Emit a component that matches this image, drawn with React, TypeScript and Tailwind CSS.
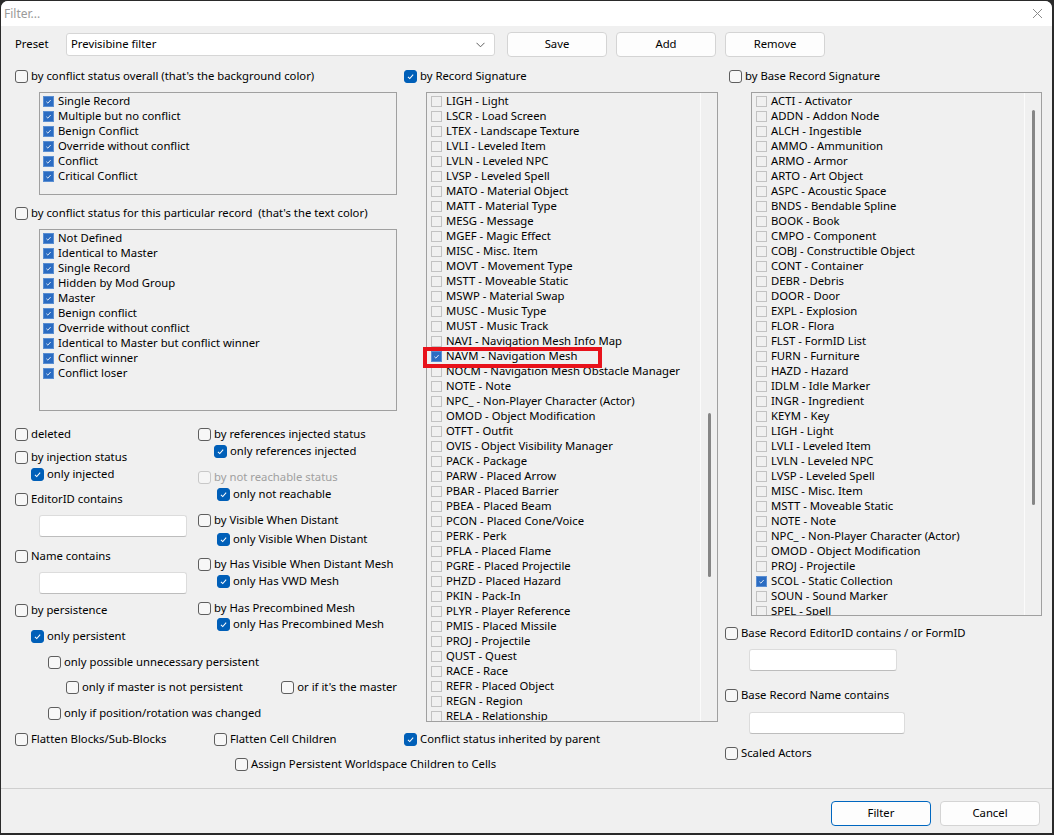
import React from 'react'

const conflictOverall = [
  'Single Record',
  'Multiple but no conflict',
  'Benign Conflict',
  'Override without conflict',
  'Conflict',
  'Critical Conflict',
]

const conflictThis = [
  'Not Defined',
  'Identical to Master',
  'Single Record',
  'Hidden by Mod Group',
  'Master',
  'Benign conflict',
  'Override without conflict',
  'Identical to Master but conflict winner',
  'Conflict winner',
  'Conflict loser',
]

const recordSigs = [
  'LIGH - Light', 'LSCR - Load Screen', 'LTEX - Landscape Texture', 'LVLI - Leveled Item',
  'LVLN - Leveled NPC', 'LVSP - Leveled Spell', 'MATO - Material Object', 'MATT - Material Type',
  'MESG - Message', 'MGEF - Magic Effect', 'MISC - Misc. Item', 'MOVT - Movement Type',
  'MSTT - Moveable Static', 'MSWP - Material Swap', 'MUSC - Music Type', 'MUST - Music Track',
  'NAVI - Navigation Mesh Info Map', 'NAVM - Navigation Mesh', 'NOCM - Navigation Mesh Obstacle Manager',
  'NOTE - Note', 'NPC_ - Non-Player Character (Actor)', 'OMOD - Object Modification', 'OTFT - Outfit',
  'OVIS - Object Visibility Manager', 'PACK - Package', 'PARW - Placed Arrow', 'PBAR - Placed Barrier',
  'PBEA - Placed Beam', 'PCON - Placed Cone/Voice', 'PERK - Perk', 'PFLA - Placed Flame',
  'PGRE - Placed Projectile', 'PHZD - Placed Hazard', 'PKIN - Pack-In', 'PLYR - Player Reference',
  'PMIS - Placed Missile', 'PROJ - Projectile', 'QUST - Quest', 'RACE - Race', 'REFR - Placed Object',
  'REGN - Region', 'RELA - Relationship',
]

const baseSigs = [
  'ACTI - Activator', 'ADDN - Addon Node', 'ALCH - Ingestible', 'AMMO - Ammunition', 'ARMO - Armor',
  'ARTO - Art Object', 'ASPC - Acoustic Space', 'BNDS - Bendable Spline', 'BOOK - Book',
  'CMPO - Component', 'COBJ - Constructible Object', 'CONT - Container', 'DEBR - Debris', 'DOOR - Door',
  'EXPL - Explosion', 'FLOR - Flora', 'FLST - FormID List', 'FURN - Furniture', 'HAZD - Hazard',
  'IDLM - Idle Marker', 'INGR - Ingredient', 'KEYM - Key', 'LIGH - Light', 'LVLI - Leveled Item',
  'LVLN - Leveled NPC', 'LVSP - Leveled Spell', 'MISC - Misc. Item', 'MSTT - Moveable Static',
  'NOTE - Note', 'NPC_ - Non-Player Character (Actor)', 'OMOD - Object Modification',
  'PROJ - Projectile', 'SCOL - Static Collection', 'SOUN - Sound Marker', 'SPEL - Spell',
]

// white tick used by both checkbox styles
const Tick = () => (
  <svg viewBox="0 0 12 12" className="block w-full h-full">
    <path d="M3.2 6.3 5.2 8.2 8.9 4" fill="none" stroke="white" strokeWidth="1.1" />
  </svg>
)

type CheckProps = {
  label: string
  checked?: boolean
  disabled?: boolean
  className?: string
}

function Check({ label, checked, disabled, className = '' }: CheckProps) {
  const box = checked
    ? 'bg-[#005fb8] border-[#005fb8]'
    : disabled
      ? 'bg-[#f5f5f5] border-[#c8c8c8]'
      : 'bg-[#f7f7f7] border-[#5e5e5e]'
  return (
    <div className={`flex items-center h-4 whitespace-pre ${className}`}>
      <span className={`w-[13px] h-[13px] shrink-0 rounded-[3px] border ${box}`}>
        {checked && <Tick />}
      </span>
      <span className={`ml-[3px] ${disabled ? 'text-[#a0a0a0]' : 'text-black'}`}>{label}</span>
    </div>
  )
}

function ListRow({ label, checked }: { label: string; checked?: boolean }) {
  return (
    <div className="flex items-center h-[15px] whitespace-nowrap">
      <span
        className={`w-[11px] h-[11px] shrink-0 border ${
          checked ? 'bg-[#2b6cc2] border-[#5a8ed2]' : 'border-[#c2c2c2]'
        }`}
      >
        {checked && <Tick />}
      </span>
      <span className="ml-[4px]">{label}</span>
    </div>
  )
}

type ListBoxProps = {
  items: string[]
  checked?: string[]
  className?: string
  pad?: string
  thumb?: string
}

function ListBox({ items, checked = [], className = '', pad = 'pl-[4px]', thumb }: ListBoxProps) {
  return (
    <div className={`flex border border-[#a0a0a0] overflow-hidden ${className}`}>
      <div className={`flex-1 min-w-0 overflow-hidden pt-[1px] ${pad}`}>
        {items.map((it, i) => (
          <ListRow key={i} label={it} checked={checked.includes(it)} />
        ))}
      </div>
      {thumb && (
        <div className="w-[17px] shrink-0 border-l border-[#fbfbfb]">
          <div className={`mx-auto w-[3px] rounded-full bg-[#868686] ${thumb}`} />
        </div>
      )}
    </div>
  )
}

const Field = ({ className = '' }: { className?: string }) => (
  <div className={`h-[22px] bg-white border border-[#dcdcdc] border-b-[#bdbdbd] rounded-[3px] ${className}`} />
)

const Button = ({ label, primary }: { label: string; primary?: boolean }) => (
  <div
    className={`w-[100px] h-[25px] flex items-center justify-center rounded-[4px] bg-[#fdfdfd] border ${
      primary ? 'border-[#0067c0]' : 'border-[#d4d4d4]'
    }`}
  >
    {label}
  </div>
)

export default function App() {
  return (
    <div className="w-[1054px] h-[835px] bg-[#2a2a2a] pt-[1px] pl-[1px] pr-[2px] pb-[2px] font-['Noto_Sans',sans-serif] text-[11.3px] text-black">
      <div className="w-full h-full flex flex-col rounded-t-[7px] overflow-hidden bg-[#f0f0f0]">
        {/* title bar */}
        <div className="h-[25px] shrink-0 bg-white flex items-center justify-between pl-[3px] pr-[9px]">
          <span className="text-[12px] text-[#9a9a9a]">Filter...</span>
          <svg width="11" height="11" viewBox="0 0 11 11">
            <path d="M1 1 10 10M10 1 1 10" stroke="#8a8a8a" strokeWidth="1" />
          </svg>
        </div>

        <div className="flex-1 flex flex-col">
          {/* preset row */}
          <div className="flex items-center h-[25px] mt-[6px] pl-[14px]">
            <span className="w-[51px]">Preset</span>
            <div className="w-[429px] h-[23px] flex items-center justify-between bg-white border border-[#d6d6d6] rounded-[3px] pl-[4px] pr-[9px]">
              <span>Previsibine filter</span>
              <svg width="9" height="6" viewBox="0 0 9 6">
                <path d="M0.5 0.8 4.5 4.8 8.5 0.8" fill="none" stroke="#5f5f5f" strokeWidth="1" />
              </svg>
            </div>
            <div className="ml-[12px] flex gap-[9px]">
              <Button label="Save" />
              <Button label="Add" />
              <Button label="Remove" />
            </div>
          </div>

          {/* main columns */}
          <div className="flex mt-[11px] pl-[14px]">
            <div className="w-[703px] flex flex-col">
              <div className="flex">
                {/* left column */}
                <div className="w-[382px] flex flex-col">
                  <Check label="by conflict status overall (that's the background color)" />
                  <ListBox
                    items={conflictOverall}
                    checked={conflictOverall}
                    pad="pl-[3px]"
                    className="ml-[24px] mt-[8px] w-[358px] h-[103px]"
                  />
                  <Check className="mt-[10px]" label="by conflict status for this particular record  (that's the text color)" />
                  <ListBox
                    items={conflictThis}
                    checked={conflictThis}
                    pad="pl-[3px]"
                    className="ml-[24px] mt-[8px] w-[358px] h-[182px]"
                  />

                  <div className="flex mt-[15px]">
                    <div className="w-[183px] flex flex-col">
                      <Check label="deleted" />
                      <Check className="mt-[7px]" label="by injection status" />
                      <Check className="mt-[1px] ml-[16px]" label="only injected" checked />
                      <Check className="mt-[9px]" label="EditorID contains" />
                      <Field className="mt-[8px] ml-[24px] w-[148px]" />
                      <Check className="mt-[11px]" label="Name contains" />
                      <Field className="mt-[8px] ml-[24px] w-[148px]" />
                      <Check className="mt-[8px]" label="by persistence" />
                      <Check className="mt-[10px] ml-[16px]" label="only persistent" checked />
                    </div>
                    <div className="flex flex-col">
                      <Check label="by references injected status" />
                      <Check className="mt-[1px] ml-[16px]" label="only references injected" checked />
                      <Check className="mt-[10px]" label="by not reachable status" disabled />
                      <Check className="mt-[1px] ml-[19px]" label="only not reachable" checked />
                      <Check className="mt-[10px]" label="by Visible When Distant" />
                      <Check className="mt-[3px] ml-[19px]" label="only Visible When Distant" checked />
                      <Check className="mt-[9px]" label="by Has Visible When Distant Mesh" />
                      <Check className="mt-[1px] ml-[19px]" label="only Has VWD Mesh" checked />
                      <Check className="mt-[11px]" label="by Has Precombined Mesh" />
                      <Check className="ml-[19px]" label="only Has Precombined Mesh" checked />
                    </div>
                  </div>

                  <Check className="mt-[10px] ml-[33px]" label="only possible unnecessary persistent" />
                  <div className="flex mt-[9px] ml-[51px]">
                    <Check className="w-[217px]" label="only if master is not persistent" />
                    <Check label="or if it's the master" />
                  </div>
                  <Check className="mt-[10px] ml-[33px]" label="only if position/rotation was changed" />
                </div>

                {/* middle column */}
                <div className="ml-[7px] w-[314px] flex flex-col">
                  <Check label="by Record Signature" checked />
                  <div className="relative ml-[22px] mt-[8px]">
                    <ListBox items={recordSigs} checked={['NAVM - Navigation Mesh']} className="w-[292px] h-[630px]" thumb="mt-[320px] h-[164px]" />
                    <div className="absolute left-[-3px] top-[255px] w-[179px] h-[21px] border-[4px] border-[#e8121b]" />
                  </div>
                </div>
              </div>

              <div className="flex mt-[9px]">
                <Check className="w-[199px]" label="Flatten Blocks/Sub-Blocks" />
                <Check className="w-[190px]" label="Flatten Cell Children" />
                <Check label="Conflict status inherited by parent" checked />
              </div>
              <Check className="mt-[9px] ml-[220px]" label="Assign Persistent Worldspace Children to Cells" />
            </div>

            {/* right column */}
            <div className="ml-[7px] w-[317px] flex flex-col">
              <Check className="ml-[4px]" label="by Base Record Signature" />
              <ListBox items={baseSigs} checked={['SCOL - Static Collection']} className="ml-[26px] mt-[8px] w-[291px] h-[524px]" thumb="mt-[17px] h-[395px]" />
              <Check className="mt-[9px]" label="Base Record EditorID contains / or FormID" />
              <Field className="mt-[8px] ml-[24px] w-[148px]" />
              <Check className="mt-[16px]" label="Base Record Name contains" />
              <Field className="mt-[9px] ml-[24px] w-[156px]" />
              <Check className="mt-[11px]" label="Scaled Actors" />
            </div>
          </div>

          <div className="mt-[16px] h-px bg-[#cfcfcf]" />

          <div className="flex justify-end gap-[9px] mt-[12px] pr-[12px]">
            <Button label="Filter" primary />
            <Button label="Cancel" />
          </div>
        </div>
      </div>
    </div>
  )
}
